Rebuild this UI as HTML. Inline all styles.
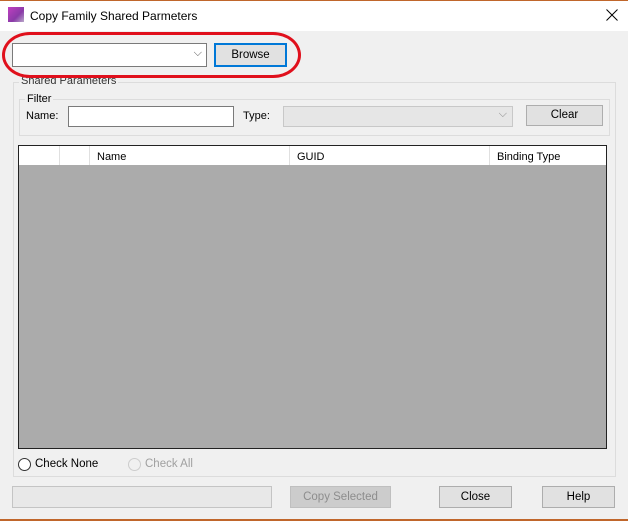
<!DOCTYPE html>
<html><head><style>
*{box-sizing:border-box;margin:0;padding:0}
body{width:628px;height:521px;background:#f0f0f0;font-family:"Liberation Sans",sans-serif;font-size:11px;color:#000;position:relative;overflow:hidden}
.a{position:absolute}
.btn{position:absolute;background:#e1e1e1;border:1px solid #adadad;text-align:center;font-size:11.5px}
.box{position:absolute;border:1px solid #dcdcdc}
</style></head><body>
<div class="a" style="left:0;top:0;width:628px;height:1px;background:#c0662b"></div>
<div class="a" style="left:0;top:1px;width:628px;height:30px;background:#fff"></div>
<div class="a" style="left:8px;top:7px;width:16px;height:15px;background:linear-gradient(135deg,#c040c0,#8a3aa8 60%,#b9a9c9)"></div>
<div class="a" style="left:30px;top:9px;font-size:12px">Copy Family Shared Parmeters</div>
<svg class="a" style="left:606px;top:9px" width="12" height="12"><path d="M0.5 0.5L11.5 11.5M11.5 0.5L0.5 11.5" stroke="#000" stroke-width="1"/></svg>

<div class="box" style="left:13px;top:82px;width:603px;height:395px"></div>
<div class="a" style="left:19px;top:75px;padding:0 2px;background:#f0f0f0;color:#333">Shared Parameters</div>
<div class="box" style="left:19px;top:99px;width:591px;height:37px"></div>
<div class="a" style="left:25px;top:93px;padding:0 2px;background:#f0f0f0">Filter</div>
<div class="a" style="left:26px;top:110px">Name:</div>
<div class="a" style="left:68px;top:106px;width:166px;height:21px;background:#fff;border:1px solid #7a7a7a"></div>
<div class="a" style="left:243px;top:110px">Type:</div>
<div class="a" style="left:283px;top:106px;width:230px;height:21px;background:#e6e6e6;border:1px solid #c8c8c8"><span class="a" style="right:5px;top:1px;color:#888">⌵</span></div>
<div class="btn" style="left:526px;top:105px;width:77px;height:21px;line-height:19px">Clear</div>

<div class="a" style="left:18px;top:145px;width:589px;height:304px;background:#ababab;border:1px solid #222"></div>
<div class="a" style="left:19px;top:146px;width:587px;height:19px;background:#fff"></div>
<div class="a" style="left:59px;top:146px;width:1px;height:19px;background:#e0e0e0"></div>
<div class="a" style="left:89px;top:146px;width:1px;height:19px;background:#e0e0e0"></div>
<div class="a" style="left:289px;top:146px;width:1px;height:19px;background:#e0e0e0"></div>
<div class="a" style="left:489px;top:146px;width:1px;height:19px;background:#e0e0e0"></div>
<div class="a" style="left:97px;top:151px">Name</div>
<div class="a" style="left:297px;top:151px">GUID</div>
<div class="a" style="left:497px;top:151px">Binding Type</div>

<div class="a" style="left:18px;top:458px;width:13px;height:13px;border:1px solid #333;border-radius:50%;background:#fff"></div>
<div class="a" style="left:35px;top:458px;font-size:11.5px">Check None</div>
<div class="a" style="left:128px;top:458px;width:13px;height:13px;border:1px solid #ccc;border-radius:50%"></div>
<div class="a" style="left:145px;top:458px;font-size:11.5px;color:#a0a0a0">Check All</div>

<div class="a" style="left:12px;top:486px;width:260px;height:22px;background:#e8e8e8;border:1px solid #c4c4c4"></div>
<div class="btn" style="left:290px;top:486px;width:101px;height:22px;line-height:20px;background:#cccccc;border-color:#bfbfbf;color:#8d8d8d">Copy Selected</div>
<div class="btn" style="left:439px;top:486px;width:73px;height:22px;line-height:20px">Close</div>
<div class="btn" style="left:542px;top:486px;width:73px;height:22px;line-height:20px">Help</div>
<div class="a" style="left:0;top:519px;width:628px;height:2px;background:#c0662b"></div>

<div class="a" style="left:12px;top:43px;width:195px;height:24px;background:#fff;border:1px solid #7a7a7a"><span class="a" style="right:4px;top:3px;color:#555">⌵</span></div>
<div class="btn" style="left:214px;top:43px;width:73px;height:24px;line-height:21px;border:2px solid #0078d7">Browse</div>
<div class="a" style="left:2px;top:32px;width:299px;height:46px;border:3px solid #e0101c;border-radius:28px/23px"></div>
</body></html>
